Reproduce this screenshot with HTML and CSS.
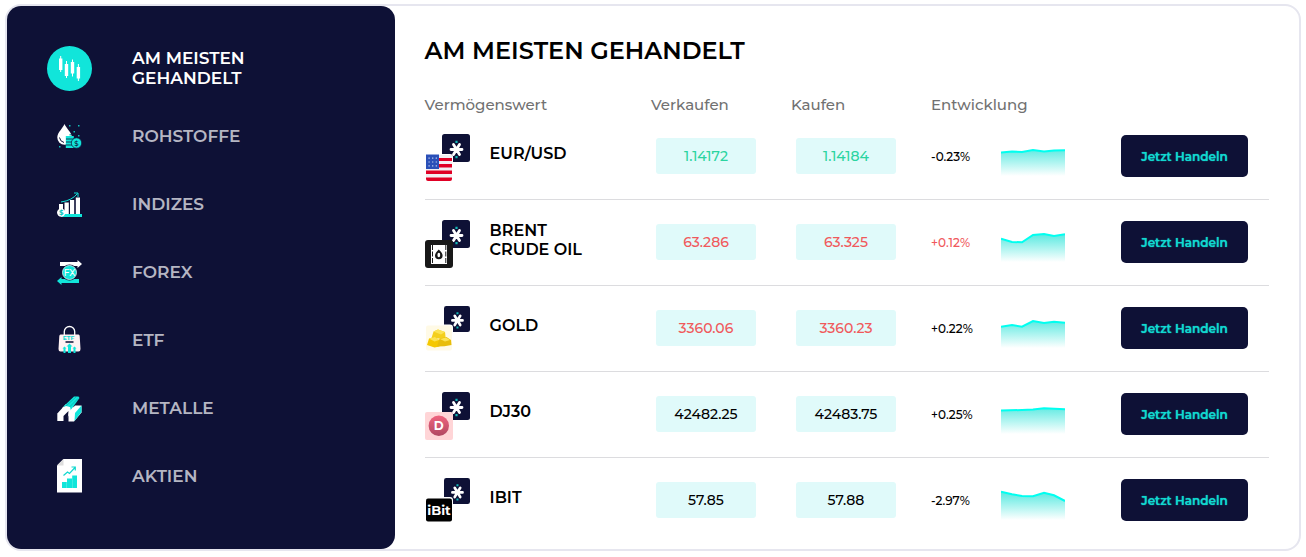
FILE: index.html
```html
<!DOCTYPE html>
<html lang="de">
<head>
<meta charset="utf-8">
<meta name="viewport" content="width=device-width, initial-scale=1">
<title>Am meisten gehandelt</title>
<link rel="stylesheet" href="styles.css">
</head>
<body>
<svg class="defs" aria-hidden="true">
  <defs>
    <linearGradient id="fade" gradientUnits="userSpaceOnUse" x1="0" y1="9" x2="0" y2="38">
      <stop offset="0" stop-color="#40e6dc" stop-opacity="0.9"/>
      <stop offset="1" stop-color="#40e6dc" stop-opacity="0"/>
    </linearGradient>
    <linearGradient id="rose" x1="0" y1="0" x2="0" y2="1">
      <stop offset="0" stop-color="#f0647f"/>
      <stop offset="1" stop-color="#b04862"/>
    </linearGradient>
    <symbol id="star" viewBox="0 0 28 28">
      <rect width="28" height="28" rx="2.500" fill="#0e1136"/>
      <path d="M9 15.500H20M11.500 10.500L17.500 20.500M17.500 10.500L11.500 20.500" stroke="#fff" stroke-width="2.800" stroke-linecap="round"/>
      <path d="M13.400 6.700h2.200v2.200h-2.200zM13.400 22h2.200v2.200h-2.200z" fill="#14b8b8"/>
    </symbol>
  </defs>
</svg>
<div class="card">
  <nav class="sidebar">
    <button class="tab active" type="button">
      <svg class="tab-icon" viewBox="0 0 45 45"><circle cx="22.500" cy="22.500" r="22.500" fill="#11e5da"/><path d="M13.700 10v16M19.500 15v17M25.500 13.500v17M31.400 18v17" stroke="#fff"/><path d="M12 12.500h3.400v11.500H12zM17.800 18h3.400v12h-3.400zM23.800 16h3.400v11.500h-3.400zM29.700 21h3.400v11.500h-3.400z" fill="#fff"/></svg>
      <span>AM MEISTEN<br>GEHANDELT</span>
    </button>
    <button class="tab" type="button">
      <svg class="tab-icon" viewBox="0 0 45 45"><path d="M17.500 10C16 14 10.300 18.500 10.300 23.500a7.300 7.300 0 0 0 14.600 0C24.900 18.500 19 14 17.500 10z" fill="#fff"/><path d="M12.500 23.500q.5 4 4.500 5" stroke="#0e1136" fill="none"/><path d="M18.800 22h8v12h-8z" fill="#11e5da"/><path d="M19 25h8M19 28h8M19 31h8" stroke="#0e1136" stroke-width=".8"/><circle cx="29.500" cy="29" r="5.200" fill="#11e5da" stroke="#0e1136" stroke-width=".7"/><text x="29.500" y="31.500" font-size="7" class="glyph thin" fill="#0e1136">$</text><path d="M22 11h1.500v1.500H22zM31 11h1.500v1.500H31zM26.500 17H28v1.500h-1.500zM31 21h1.500v1.500H31zM22.500 20H24v1.500h-1.500zM12 32h1.500v1.500H12z" fill="#11bdb9"/></svg>
      <span>ROHSTOFFE</span>
    </button>
    <button class="tab" type="button">
      <svg class="tab-icon" viewBox="0 0 45 45"><path d="M12 22h4v11h-4zM17.500 20.500h4.300V32h-4.300zM23 18h4.200v14H23zM28.800 15.500H33V32h-4.200z" fill="#fff"/><path d="M14 32h21v3H14z" fill="#11e5da"/><circle cx="14.200" cy="30.600" r="4.200" fill="#fff"/><text x="14.200" y="33.300" font-size="7" class="glyph" fill="#11c8c0">$</text><path d="M14 20Q25 18.500 30.500 11.500M27 11h4v4" fill="none" stroke="#11e5da"/></svg>
      <span>INDIZES</span>
    </button>
    <button class="tab" type="button">
      <svg class="tab-icon" viewBox="0 0 45 45"><path d="M10 14h3v-2h17.500v-2L35 14l-4.500 4v-2H13v-2z" fill="#fff"/><path d="M35 31h-3v-2H14.500v-2L10 31l4.500 4v-2H32v-2z" fill="#11e5da"/><circle cx="22.500" cy="22.500" r="8" fill="#0e1136"/><circle cx="22.500" cy="22.500" r="7" fill="#11e5da" stroke="#d8fbf9" stroke-width=".8"/><text x="22.500" y="25.700" font-size="9" class="glyph thin" fill="#fff">FX</text></svg>
      <span>FOREX</span>
    </button>
    <button class="tab" type="button">
      <svg class="tab-icon" viewBox="0 0 45 45"><path d="M17.300 17v-3.500a5.200 5 0 0 1 10.400 0V17" fill="none" stroke="#fff" stroke-width="1.300"/><path d="M13.500 16.500h18q1 0 1.200 1.500l.8 13q0 2.500-2 2.500h-18q-2 0-2-2.500l.8-13q.2-1.500 1.200-1.500z" fill="#fff2f3"/><text x="21.500" y="21.500" font-size="6" class="glyph" fill="#11d8ce">ETF</text><path d="M18.500 24h8" stroke="#0e1136" stroke-width="1.500"/><path d="M16.500 35v-4.500h-1l2-2 2 2h-1V35zM21 35v-6.500h-1.500l3-3 3 3H24V35zM26.500 35v-4.500h-1l2-2 2 2h-1V35z" fill="#11e5da"/></svg>
      <span>ETF</span>
    </button>
    <button class="tab" type="button">
      <svg class="tab-icon" viewBox="0 0 45 45"><path d="M10.300 27.500L19 18h6l2 4-9 13h-7.700z" fill="#fff"/><path d="M16.500 20.500L27 10.500h4.500l1 1.500-9 12.500-1.500 1.500-3-3z" fill="#11e5da"/><path d="M19 20L29 11M21.500 22L31 12.500" stroke="#0ba8aa" stroke-width=".7"/><path d="M15 22l4-2 4 1 1 4-3 3z" fill="#fff"/><path d="M21.500 27L28 19.500h6.500v7L27 35.500h-5.500z" fill="#fff"/><path d="M28 27l6.500-7.500V26L27.500 35z" fill="#11e5da"/><path d="M16.500 35v-5l5-5-1 10z" fill="#0e1136"/></svg>
      <span>METALLE</span>
    </button>
    <button class="tab" type="button">
      <svg class="tab-icon" viewBox="0 0 45 45"><path d="M16.500 5H35v33.500H10V11.500z" fill="#fff"/><path d="M16.500 5v6.500H10z" fill="#ddd"/><path d="M15 28h4.800v6H15zM20 24.500h5v9.500h-5zM25.200 21.500H30V34h-4.800z" fill="#11e5da"/><path d="M16.500 21.500l4-3.500 2 1.500 5.500-6M24.500 13h3.800v3.500" fill="none" stroke="#11d8ce" stroke-width="1.200"/></svg>
      <span>AKTIEN</span>
    </button>
  </nav>
  <main class="content">
    <h1>AM MEISTEN GEHANDELT</h1>
    <table class="assets">
      <colgroup><col><col class="price-col"><col class="price-col"><col class="change-col"><col class="chart-col"><col class="action-col"></colgroup>
      <thead>
        <tr><th scope="col">Vermögenswert</th><th scope="col">Verkaufen</th><th scope="col">Kaufen</th><th scope="col" colspan="3">Entwicklung</th></tr>
      </thead>
      <tbody>
        <tr>
          <td><div class="asset"><svg class="logo" viewBox="0 0 45 48"><use href="#star" x="17" width="28" height="28"/><rect y="20" width="28" height="28" rx="3" fill="#fff"/><rect x="1" y="21" width="26" height="26" rx="2" fill="#e00025"/><path d="M1 21h26v3H1zM1 27h26v3H1zM1 33.500h26v3H1zM1 40h26v3.500H1z" fill="#f1eff2"/><path d="M1 20.500h13V35H1z" fill="#2a50b8"/><path d="M3.500 24.200h9M3.500 28h9M3.500 31.800h9" stroke="#c9d4f0" stroke-width="1.200" stroke-dasharray="1.200 2.400"/></svg><span>EUR/USD</span></div></td>
          <td><span class="price up">1.14172</span></td><td><span class="price up">1.14184</span></td><td class="change">-0.23%</td>
          <td><svg class="chart" viewBox="0 0 64 38"><path d="M0 14.500L11 13.500 21 14 32 12 43 13.500 53 12.500 64 12.300V38H0z" fill="url(#fade)"/><path class="line" d="M0 14.500L11 13.500 21 14 32 12 43 13.500 53 12.500 64 12.300"/></svg></td>
          <td><button class="trade" type="button">Jetzt Handeln</button></td>
        </tr>
        <tr>
          <td><div class="asset"><svg class="logo" viewBox="0 0 45 48"><use href="#star" x="17" width="28" height="28"/><rect y="20" width="28" height="28" rx="3" fill="#181818"/><path d="M6 25h16v19H6z" fill="#fff"/><path d="M7.500 25v19M20.800 25v19" stroke="#181818" stroke-dasharray="5 1.500"/><path d="M13.800 29.500Q10 33 10 35.500a3.800 3.800 0 0 0 7.600 0Q17.600 33 13.800 29.500z" fill="#181818"/><ellipse cx="13.800" cy="35" rx="1.400" ry="2.200" fill="#fff"/></svg><span>BRENT<br>CRUDE OIL</span></div></td>
          <td><span class="price down">63.286</span></td><td><span class="price down">63.325</span></td><td class="change down">+0.12%</td>
          <td><svg class="chart" viewBox="0 0 64 38"><path d="M0 14.700L11 18 21 18.300 32 11 43 10 53 12 64 10.300V38H0z" fill="url(#fade)"/><path class="line" d="M0 14.700L11 18 21 18.300 32 11 43 10 53 12 64 10.300"/></svg></td>
          <td><button class="trade" type="button">Jetzt Handeln</button></td>
        </tr>
        <tr>
          <td><div class="asset"><svg class="logo" viewBox="0 0 45 48"><use href="#star" x="19" width="26" height="26"/><rect y="18.500" width="28" height="28" rx="3" fill="#fff"/><rect x="1" y="19.500" width="26" height="25" rx="2" fill="#fffae6"/><path d="M6.500 32l2-6.500 4.500-2 7 2.500.8 7z" fill="#f4cf1c"/><path d="M2 39l2-6.500 6-1.500 4 3 .5 6.500-5 1z" fill="#f5c800"/><path d="M12 40.500l2.500-8 7-1.500 4.500 3 .5 5-7 1.200z" fill="#e8bd0a"/><path d="M8.500 25.500l4.500-2 7 2.500-4 2.500zM4 32.500l6-1.500 4 3-4.500 1.500zM15 33l6-1.500 4 2.500-5 1.500z" fill="#fbe354"/></svg><span>GOLD</span></div></td>
          <td><span class="price down">3360.06</span></td><td><span class="price down">3360.23</span></td><td class="change">+0.22%</td>
          <td><svg class="chart" viewBox="0 0 64 38"><path d="M0 16.700L11 15 21 16.700 32 11 43 13 53 11.700 64 12.700V38H0z" fill="url(#fade)"/><path class="line" d="M0 16.700L11 15 21 16.700 32 11 43 13 53 11.700 64 12.700"/></svg></td>
          <td><button class="trade" type="button">Jetzt Handeln</button></td>
        </tr>
        <tr>
          <td><div class="asset"><svg class="logo" viewBox="0 0 45 48"><use href="#star" x="17" width="28" height="28"/><rect y="20" width="28" height="28" rx="2" fill="#ffd5d7"/><circle cx="13.800" cy="33.700" r="10.200" fill="url(#rose)"/><text x="13.800" y="38" font-size="12" class="glyph" fill="#fff">D</text></svg><span>DJ30</span></div></td>
          <td><span class="price">42482.25</span></td><td><span class="price">42483.75</span></td><td class="change">+0.25%</td>
          <td><svg class="chart" viewBox="0 0 64 38"><path d="M0 14.500L21 14 32 13.500 43 12.300 64 13.300V38H0z" fill="url(#fade)"/><path class="line" d="M0 14.500L21 14 32 13.500 43 12.300 64 13.300"/></svg></td>
          <td><button class="trade" type="button">Jetzt Handeln</button></td>
        </tr>
        <tr>
          <td><div class="asset"><svg class="logo" viewBox="0 0 45 48"><use href="#star" x="19" width="26" height="26"/><rect y="19" width="28" height="26" rx="3" fill="#fff"/><rect x="1" y="20.500" width="26" height="23" rx="2" fill="#000"/><text x="14" y="37" font-size="13" class="glyph" fill="#fff">iBit</text></svg><span>IBIT</span></div></td>
          <td><span class="price">57.85</span></td><td><span class="price">57.88</span></td><td class="change">-2.97%</td>
          <td><svg class="chart" viewBox="0 0 64 38"><path d="M0 9.700L11 12.300 21 14 32 14.300 43 10.700 53 13.300 64 19V38H0z" fill="url(#fade)"/><path class="line" d="M0 9.700L11 12.300 21 14 32 14.300 43 10.700 53 13.300 64 19"/></svg></td>
          <td><button class="trade" type="button">Jetzt Handeln</button></td>
        </tr>
      </tbody>
    </table>
  </main>
</div>
</body>
</html>
```
FILE: styles.css
```css
* {
  box-sizing: border-box;
}

body {
  margin: 4px 5px;
  background: #fff;
  color: #000;
  font-family: Montserrat, Inter, "Liberation Sans", sans-serif;
}

button {
  border: 0;
  font-family: inherit;
  cursor: pointer;
}

.defs {
  position: absolute;
  width: 0;
  height: 0;
}

.card {
  display: flex;
  border: 2px solid #e6e6ef;
  border-radius: 16px;
}

.sidebar {
  display: flex;
  flex-direction: column;
  width: 30%;
  padding: 28px 40px;
  border-radius: 14px;
  background: #0e1136;
}

.tab {
  display: flex;
  align-items: center;
  gap: 40px;
  height: 68px;
  padding: 0;
  background: none;
  color: #b5b6c3;
  font-size: 17px;
  font-weight: 600;
  line-height: 20px;
  text-align: left;
}

.tab.active {
  color: #fff;
}

.tab-icon {
  flex: none;
  width: 45px;
  height: 45px;
}

.glyph {
  font-weight: 700;
  text-anchor: middle;
}

.glyph.thin {
  font-weight: 500;
}

.content {
  flex: 1;
  min-width: 0;
  padding: 30px 30px 5px;
}

h1 {
  margin: 0;
  font-size: 24px;
  font-weight: 600;
  line-height: 30px;
}

.assets {
  width: 100%;
  margin-top: 30px;
  border-spacing: 0;
  table-layout: fixed;
}

.price-col {
  width: 140px;
}

.change-col {
  width: 70px;
}

.chart-col {
  width: 120px;
}

.action-col {
  width: 148px;
}

th {
  height: 18px;
  padding: 0;
  color: #717171;
  font-size: 15px;
  font-weight: 500;
  line-height: 18px;
  text-align: left;
}

td {
  height: 86px;
  padding: 0;
  border-bottom: 1px solid #dcdcdf;
}

tbody tr:last-child td {
  border-bottom-color: transparent;
}

.asset {
  display: flex;
  align-items: flex-start;
  gap: 20px;
  height: 46px;
  font-size: 16px;
  font-weight: 600;
  line-height: 19px;
}

.asset span {
  align-self: center;
  padding-bottom: 6px;
}

.logo {
  flex: none;
  width: 45px;
  height: 48px;
}

.price {
  display: block;
  width: 100px;
  margin: 0 0 1px 5px;
  border-radius: 3px;
  background: #e0fafa;
  font-size: 14px;
  font-weight: 500;
  line-height: 36px;
  text-align: center;
}

.price.up {
  color: #2bd4a0;
}

.down {
  color: #f0595c;
}

.change {
  font-size: 12px;
  font-weight: 500;
}

.chart {
  display: block;
  width: 64px;
  height: 38px;
}

.line {
  fill: none;
  stroke: #00fff0;
  stroke-width: 2px;
}

.trade {
  display: block;
  width: 127px;
  height: 42px;
  margin: 0 0 1px;
  padding: 0;
  border-radius: 5px;
  background: #0e1136;
  color: #11d8cf;
  font-size: 12px;
  font-weight: 600;
  text-shadow: 0 0 1px currentColor;
}
```
